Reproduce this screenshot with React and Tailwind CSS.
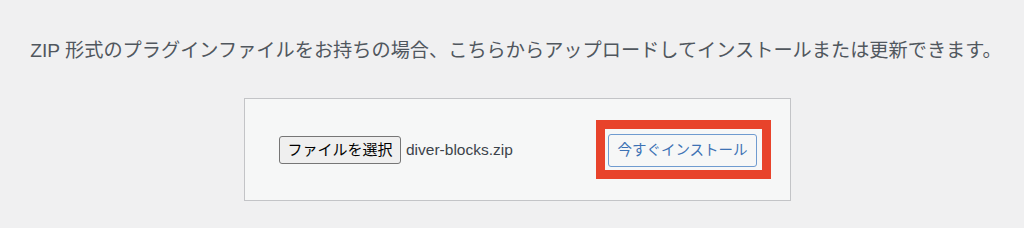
export default function App() {
  return (
    <div
      className="w-[1024px] h-[228px] bg-[#f0f0f1] overflow-hidden"
      style={{ fontFamily: '"Liberation Sans", "Noto Sans CJK JP", sans-serif' }}
    >
      <p className="pt-[37px] pl-[8px] text-center text-[19.2px] leading-[28px] text-[#50575e] whitespace-nowrap">
        ZIP 形式のプラグインファイルをお持ちの場合、こちらからアップロードしてインストールまたは更新できます。
      </p>
      <div className="ml-[244px] mt-[33px] w-[547px] h-[103px] border border-[#c3c4c7] bg-[#f6f7f7] flex items-center justify-between pl-[34px] pr-[19px]">
        <div className="flex items-center gap-[5px]">
          <button className="h-[28px] w-[122px] rounded-[3px] border border-[#767676] bg-[#efefef] text-[15px] text-black leading-none">
            ファイルを選択
          </button>
          <span className="text-[15.5px] text-[#3c434a]">diver-blocks.zip</span>
        </div>
        <div className="border-[9px] border-[#e8432b] pl-[3px] pr-[5px] pt-[5px] pb-[3px] bg-[#f6f7f7]">
          <button className="w-[149px] h-[33px] rounded-[3px] border border-[#6f9bd0] bg-[#f6f7f7] text-[14.5px] text-[#3d72b4] leading-none">
            今すぐインストール
          </button>
        </div>
      </div>
    </div>
  );
}
